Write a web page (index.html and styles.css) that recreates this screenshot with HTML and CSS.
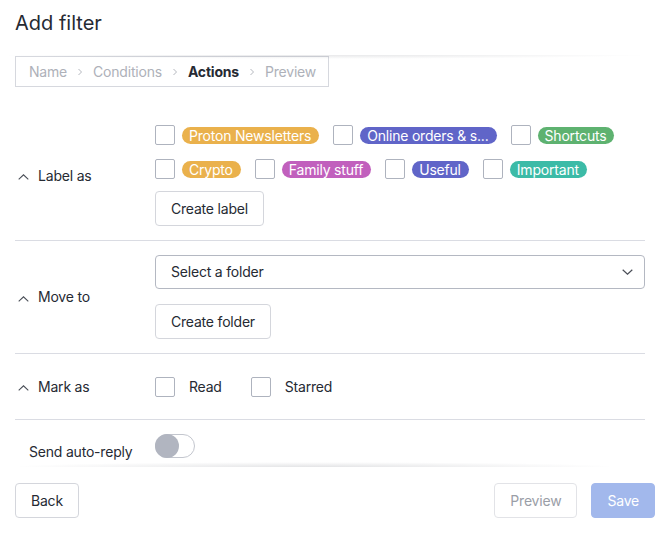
FILE: index.html
```html
<!DOCTYPE html>
<html>
<head>
<meta charset="utf-8">
<link rel="stylesheet" href="styles.css">
</head>
<body>
<div class="modal">
  <header class="modal-header">
    <h1 class="title">Add filter</h1>
  </header>
  <div class="modal-content">
    <div class="shadow shadow-top"></div>
    <nav class="steps">
      <span class="step">Name</span>
      <svg class="step-sep" viewBox="0 0 8 10" width="8" height="10"><path d="M2.5 2 L5.5 5 L2.5 8" fill="none" stroke="currentColor" stroke-width="1"/></svg>
      <span class="step">Conditions</span>
      <svg class="step-sep" viewBox="0 0 8 10" width="8" height="10"><path d="M2.5 2 L5.5 5 L2.5 8" fill="none" stroke="currentColor" stroke-width="1"/></svg>
      <span class="step step-active">Actions</span>
      <svg class="step-sep" viewBox="0 0 8 10" width="8" height="10"><path d="M2.5 2 L5.5 5 L2.5 8" fill="none" stroke="currentColor" stroke-width="1"/></svg>
      <span class="step">Preview</span>
    </nav>

    <section class="row row-labels">
      <div class="row-label">
        <svg class="caret" viewBox="0 0 11 6" width="11" height="6"><path d="M0.7 5.3 L5.5 0.8 L10.3 5.3" fill="none" stroke="currentColor" stroke-width="1.1"/></svg>
        <span>Label as</span>
      </div>
      <div class="row-field">
        <div class="label-list">
          <label class="label-item"><span class="checkbox"></span><span class="pill pill-orange">Proton Newsletters</span></label>
          <label class="label-item"><span class="checkbox"></span><span class="pill pill-indigo">Online orders &amp; s...</span></label>
          <label class="label-item"><span class="checkbox"></span><span class="pill pill-green">Shortcuts</span></label>
          <label class="label-item"><span class="checkbox"></span><span class="pill pill-orange">Crypto</span></label>
          <label class="label-item"><span class="checkbox"></span><span class="pill pill-magenta">Family stuff</span></label>
          <label class="label-item"><span class="checkbox"></span><span class="pill pill-indigo">Useful</span></label>
          <label class="label-item"><span class="checkbox"></span><span class="pill pill-teal">Important</span></label>
        </div>
        <button class="btn btn-create-label">Create label</button>
      </div>
    </section>

    <section class="row row-move">
      <div class="row-label">
        <svg class="caret" viewBox="0 0 11 6" width="11" height="6"><path d="M0.7 5.3 L5.5 0.8 L10.3 5.3" fill="none" stroke="currentColor" stroke-width="1.1"/></svg>
        <span>Move to</span>
      </div>
      <div class="row-field">
        <div class="select">
          <span>Select a folder</span>
          <svg class="select-caret" viewBox="0 0 11 6" width="11" height="6"><path d="M0.7 0.7 L5.5 5.2 L10.3 0.7" fill="none" stroke="currentColor" stroke-width="1.2"/></svg>
        </div>
        <button class="btn btn-create-folder">Create folder</button>
      </div>
    </section>

    <section class="row row-mark">
      <div class="row-label">
        <svg class="caret" viewBox="0 0 11 6" width="11" height="6"><path d="M0.7 5.3 L5.5 0.8 L10.3 5.3" fill="none" stroke="currentColor" stroke-width="1.1"/></svg>
        <span>Mark as</span>
      </div>
      <div class="row-field mark-list">
        <label class="mark-item"><span class="checkbox"></span><span>Read</span></label>
        <label class="mark-item"><span class="checkbox"></span><span>Starred</span></label>
      </div>
    </section>

    <section class="row row-autoreply">
      <div class="row-label row-label-plain">
        <span>Send auto-reply</span>
      </div>
      <div class="row-field">
        <span class="toggle"><span class="toggle-thumb"></span></span>
      </div>
    </section>
    <div class="shadow shadow-bottom"></div>
  </div>
  <footer class="modal-footer">
    <button class="btn">Back</button>
    <div class="footer-right">
      <button class="btn btn-disabled">Preview</button>
      <button class="btn btn-primary-disabled">Save</button>
    </div>
  </footer>
</div>
</body>
</html>
```

FILE: styles.css
```css
* {
  box-sizing: border-box;
}

html, body {
  margin: 0;
  padding: 0;
  background: #ffffff;
}

body {
  font-family: Inter, "Noto Sans", sans-serif;
  font-size: 14px;
  line-height: 20px;
  letter-spacing: -0.2px;
  color: #262a33;
}

.modal {
  width: 669px;
  height: 534px;
  display: flex;
  flex-direction: column;
  overflow: hidden;
}

.modal-header {
  padding: 11px 15px 20px;
}

.title {
  margin: 0;
  font-size: 20px;
  line-height: 24px;
  font-weight: 400;
  letter-spacing: 0;
  color: #262a33;
}

.modal-content {
  position: relative;
  flex: 1;
  overflow: hidden;
  padding: 1px 24px 0 15px;
}

.shadow {
  position: absolute;
  left: 0;
  right: 20px;
  height: 5px;
  pointer-events: none;
  z-index: 2;
}

.shadow-top {
  top: -1px;
  background: radial-gradient(ellipse 52% 100% at 50% 0%, rgba(30, 35, 50, 0.13), rgba(30, 35, 50, 0) 100%);
}

.shadow-bottom {
  bottom: 0;
  left: 20px;
  right: 60px;
  background: radial-gradient(ellipse 52% 100% at 50% 100%, rgba(30, 35, 50, 0.12), rgba(30, 35, 50, 0) 100%);
}

.steps {
  display: inline-flex;
  align-items: center;
  height: 31px;
  padding: 0 12px 0 13px;
  border: 1px solid #d6d8de;
  color: #aeb1b9;
  margin-bottom: 24px;
}

.step {
  white-space: nowrap;
}

.step-active {
  color: #262a33;
  font-weight: 700;
}

.step-sep {
  margin: 0 9px;
  color: #b5b8bf;
}

.row {
  display: grid;
  grid-template-columns: 140px 1fr;
  align-items: center;
  padding: 14px 0;
  border-bottom: 1px solid #dadce3;
}

.row-autoreply {
  border-bottom: none;
  align-items: start;
}

.row-label {
  display: flex;
  align-items: center;
  gap: 9px;
  padding-left: 3px;
}

.row-label-plain {
  padding-left: 14px;
  padding-top: 8px;
}

.caret {
  color: #4a4e57;
  margin-top: 3px;
}

.row-field {
  display: flex;
  flex-direction: column;
  align-items: flex-start;
}

.label-list {
  display: flex;
  flex-wrap: wrap;
  column-gap: 14px;
  row-gap: 14px;
  margin-bottom: 12px;
}

.label-item {
  display: flex;
  align-items: center;
  gap: 7px;
  height: 20px;
}

.checkbox {
  display: inline-block;
  width: 20px;
  height: 20px;
  border: 1px solid #aeb3be;
  border-radius: 2px;
  background: #ffffff;
  flex-shrink: 0;
}

.pill {
  display: inline-block;
  height: 17px;
  line-height: 17px;
  padding: 0 8px 0 7px;
  border-radius: 9px;
  color: #ffffff;
  white-space: nowrap;
}

.pill-orange { background: #eab14c; }
.pill-indigo { background: #6065c8; }
.pill-green { background: #5eb270; }
.pill-magenta { background: #c160bd; }
.pill-teal { background: #3cbba7; }

.btn {
  font-family: inherit;
  font-size: 14px;
  line-height: 20px;
  letter-spacing: -0.2px;
  height: 35px;
  padding: 0 15px;
  border: 1px solid #d4d6dc;
  border-radius: 4px;
  background: #ffffff;
  color: #262a33;
}

.select {
  width: 100%;
  height: 34px;
  display: flex;
  align-items: center;
  justify-content: space-between;
  padding: 0 11px 0 15px;
  border: 1px solid #b4b8c2;
  border-radius: 4px;
  margin-bottom: 15px;
}

.select-caret {
  color: #4a4e57;
}

.mark-list {
  flex-direction: row;
  align-items: center;
  height: 37px;
  gap: 29px;
}

.mark-item {
  display: flex;
  align-items: center;
  gap: 14px;
}

.toggle {
  position: relative;
  display: inline-block;
  width: 40px;
  height: 24px;
  border: 1px solid #c3c6ce;
  border-radius: 12px;
  background: #ffffff;
}

.toggle-thumb {
  position: absolute;
  left: -1px;
  top: -1px;
  width: 24px;
  height: 24px;
  border-radius: 50%;
  background: #b1b5c0;
}

.modal-footer {
  display: flex;
  justify-content: space-between;
  align-items: center;
  padding: 16px 14px 16px 15px;
}

.footer-right {
  display: flex;
  gap: 14px;
}

.btn-disabled {
  color: #9a9ea7;
  border-color: #e2e3e7;
}

.btn-primary-disabled {
  background: #a2b8ec;
  border-color: #a2b8ec;
  color: #ffffff;
}
```
